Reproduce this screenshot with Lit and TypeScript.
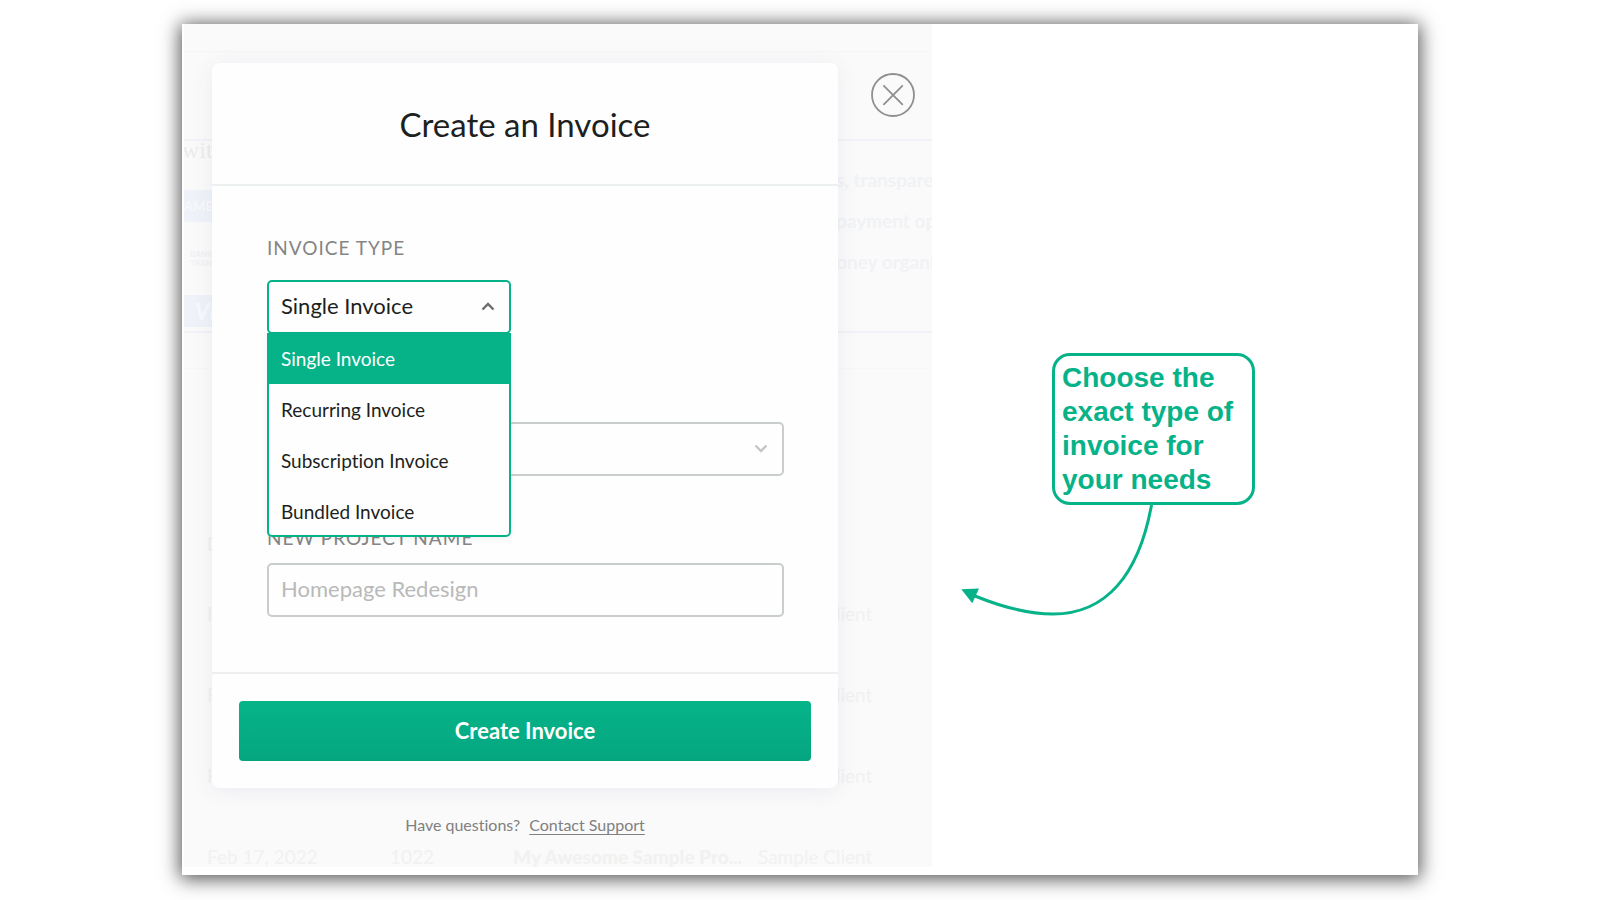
import { LitElement, html, css, svg } from "lit";
import { customElement, state } from "lit/decorators.js";

const chevron = (points: string) => html`
  <svg class="chevron" viewBox="0 0 14 9" width="14" height="9" aria-hidden="true">
    ${svg`<polyline points=${points} fill="none" stroke="currentColor" stroke-width="2.4"/>`}
  </svg>
`;

/* The dimmed invoices page that lies under the dialog. */
@customElement("invoices-backdrop")
class InvoicesBackdrop extends LitElement {
  static styles = css`
    :host {
      display: block;
      overflow: hidden;
      min-width: 0;
      background: #fafafa;
      border-left: 2px solid #fff;
      font-family: Lato, "Open Sans", sans-serif;
      font-size: 19px;
      color: #f1f1f1;
    }
    .bar {
      height: 28px;
      box-sizing: border-box;
      border-bottom: 1px solid #f6f6f6;
    }
    .tabs {
      height: 89px;
      box-sizing: border-box;
      border-bottom: 2px solid #f1f3f6;
    }
    .promo {
      display: flex;
      justify-content: space-between;
      height: 192px;
      box-sizing: border-box;
      border-bottom: 2px solid #f0f2f6;
    }
    .payments {
      display: flex;
      flex-direction: column;
    }
    .heading {
      height: 49px;
      box-sizing: border-box;
      margin-left: -2px;
      font-family: "Liberation Serif", serif;
      font-size: 24px;
      line-height: 18px;
      color: #ececec;
    }
    .brand {
      display: flex;
      align-items: center;
      height: 32px;
      width: 52px;
      background: #eff2f8;
      color: #f8f9fb;
      font-size: 13px;
      font-weight: 700;
    }
    .visa {
      padding-left: 11px;
      box-sizing: border-box;
      font-size: 22px;
      font-style: italic;
      font-weight: 900;
    }
    .bank {
      display: flex;
      flex-direction: column;
      justify-content: center;
      height: 73px;
      padding-left: 6px;
      font-size: 8px;
      line-height: 9px;
      font-weight: 900;
    }
    .benefits {
      width: 96px;
      padding-top: 18px;
      font-weight: 700;
      line-height: 41px;
      white-space: nowrap;
      color: #f1f2f5;
    }
    .strip {
      height: 36px;
      box-sizing: border-box;
      border-bottom: 1px solid #f7f7f7;
    }
    .table {
      width: 100%;
      table-layout: fixed;
      border-collapse: collapse;
      text-align: left;
      white-space: nowrap;
    }
    .table th {
      height: 204px;
      box-sizing: border-box;
      padding: 0 0 18px;
      vertical-align: bottom;
      font-weight: 400;
    }
    .table td {
      height: 81px;
      padding: 0;
    }
    .table .lead {
      width: 206px;
      padding-left: 23px;
      box-sizing: border-box;
    }
    .number {
      width: 123px;
    }
    .project {
      width: 245px;
      font-weight: 900;
    }
  `;

  render() {
    return html`
      <div class="bar"></div>
      <div class="tabs"></div>
      <div class="promo">
        <div class="payments">
          <div class="heading">with</div>
          <div class="brand">AMEX</div>
          <div class="bank"><span>BANK</span><span>TRANSFER</span></div>
          <div class="brand visa">VISA</div>
        </div>
        <div class="benefits">
          <div>s, transparent</div>
          <div>payment options</div>
          <div>oney organized</div>
        </div>
      </div>
      <div class="strip"></div>
      <table class="table">
        <thead>
          <tr><th class="lead">Date</th><th class="number"></th><th class="project"></th><th></th></tr>
        </thead>
        <tbody>
          ${[0, 1, 2].map(() => html`
            <tr><td class="lead">Feb</td><td></td><td></td><td>Sample Client</td></tr>
          `)}
          <tr>
            <td class="lead">Feb 17, 2022</td>
            <td>1022</td>
            <td class="project">My Awesome Sample Pro...</td>
            <td>Sample Client</td>
          </tr>
        </tbody>
      </table>
    `;
  }
}

@customElement("invoice-dialog")
class InvoiceDialog extends LitElement {
  @state() types = ["Single Invoice", "Recurring Invoice", "Subscription Invoice", "Bundled Invoice"];
  @state() selected = "Single Invoice";

  static styles = css`
    :host {
      display: flex;
      align-items: flex-start;
      gap: 33px;
      padding: 39px 17px 0 30px;
      font-family: Lato, "Open Sans", sans-serif;
      font-variant-ligatures: none;
      color: #1d1f21;
    }
    .main {
      flex: 1;
      min-width: 0;
    }
    .card {
      background: #fefefe;
      border-radius: 8px;
      box-shadow: 0 3px 22px rgba(60, 80, 140, 0.08);
    }
    .title {
      margin: 0;
      padding: 39px 0 38px;
      border-bottom: 2px solid #edf0f0;
      font-size: 33px;
      line-height: 44px;
      font-weight: 400;
      text-align: center;
    }
    .body {
      display: flex;
      flex-direction: column;
      padding: 50px 54px 55px 55px;
    }
    .label {
      font-size: 19px;
      line-height: 24px;
      letter-spacing: 1px;
      text-transform: uppercase;
      color: #858585;
    }
    .picker {
      position: relative;
      width: 244px;
      margin: 20px 0 88px;
    }
    .control {
      position: relative;
      display: block;
    }
    .field {
      display: block;
      width: 100%;
      height: 54px;
      box-sizing: border-box;
      margin: 0;
      padding: 0 12px 4px;
      border: 2px solid #cacdcd;
      border-radius: 5px;
      background: #fefefe;
      outline: none;
      appearance: none;
      font-family: inherit;
      font-size: 22px;
      color: inherit;
    }
    .field::placeholder {
      color: #b9b9b9;
      opacity: 1;
    }
    .open {
      border-color: #06b288;
    }
    .chevron {
      position: absolute;
      right: 16px;
      top: 22px;
      pointer-events: none;
      color: #c6c6c6;
    }
    .picker .chevron {
      color: #6c6c6c;
    }
    .options {
      position: absolute;
      z-index: 1;
      top: 53px;
      left: 0;
      right: 0;
      margin: 0;
      padding: 0;
      list-style: none;
      background: #fefefe;
      border-radius: 0 0 5px 5px;
      box-shadow: inset 0 0 0 2px #06b288, 0 2px 6px rgba(0, 0, 0, 0.06);
      font-size: 19px;
      line-height: 51px;
    }
    .option {
      padding: 0 14px;
    }
    .active {
      background: #06b288;
      color: #fff;
    }
    .project {
      margin: 50px 0 13px;
    }
    .footer {
      padding: 27px;
      border-top: 2px solid #eeefef;
    }
    .submit {
      display: block;
      width: 100%;
      height: 60px;
      padding: 0 0 2px;
      border: 0;
      border-radius: 4px;
      background: linear-gradient(#06b48a, #05a67f);
      color: #fff;
      font-family: inherit;
      font-size: 22px;
      font-weight: 700;
    }
    .help {
      display: flex;
      justify-content: center;
      gap: 9px;
      margin: 0;
      padding-top: 25px;
      font-size: 16px;
      line-height: 24px;
      color: #808080;
    }
    .link {
      color: inherit;
      text-underline-offset: 3px;
    }
    .close {
      width: 44px;
      height: 44px;
      margin-top: 10px;
      padding: 0;
      border: 0;
      background: none;
      color: #8f8f8f;
    }
    .cross {
      display: block;
    }
  `;

  render() {
    return html`
      <div class="main">
        <form class="card" @submit=${(e: Event) => e.preventDefault()}>
          <h1 class="title">Create an Invoice</h1>
          <div class="body">
            <label class="label" for="type">Invoice type</label>
            <div class="picker">
              <select class="field open" id="type">
                <option selected>${this.selected}</option>
              </select>
              ${chevron("1.5,7.5 7,2 12.5,7.5")}
              <ul class="options" role="listbox" aria-label="Invoice type">
                ${this.types.map((type) => html`
                  <li
                    class="option ${type === this.selected ? "active" : ""}"
                    role="option"
                    aria-selected=${type === this.selected}
                    @click=${() => (this.selected = type)}
                  >${type}</li>
                `)}
              </ul>
            </div>
            <div class="control">
              <select class="field" aria-label="Client"></select>
              ${chevron("1.5,1.5 7,7 12.5,1.5")}
            </div>
            <label class="label project" for="project">New project name</label>
            <input class="field" id="project" type="text" placeholder="Homepage Redesign" />
          </div>
          <div class="footer">
            <button class="submit" type="submit">Create Invoice</button>
          </div>
        </form>
        <p class="help"><span>Have questions?</span><a class="link" href="#support">Contact Support</a></p>
      </div>
      <button class="close" type="button" aria-label="Close">
        <svg class="cross" viewBox="0 0 44 44" width="44" height="44" fill="none" stroke="currentColor" stroke-width="1.8">
          <circle cx="22" cy="22" r="21" />
          <path d="M12.4 12.4 31.8 31.8M31.8 12.4 12.4 31.8" />
        </svg>
      </button>
    `;
  }
}

@customElement("callout-note")
class CalloutNote extends LitElement {
  static styles = css`
    :host {
      display: flex;
      flex-direction: column;
      align-items: flex-start;
      width: 294px;
      color: #06b288;
    }
    .note {
      align-self: flex-end;
      width: 203px;
      box-sizing: border-box;
      margin: 0;
      padding: 5px 7px;
      border: 3px solid currentColor;
      border-radius: 18px;
      background: #fff;
      font: 700 28px/34px "Liberation Sans", Arial, sans-serif;
    }
    .arrow {
      display: block;
      overflow: visible;
    }
  `;

  render() {
    return html`
      <p class="note">Choose the exact type of invoice for your needs</p>
      <svg class="arrow" viewBox="0 0 194 112" width="194" height="112" aria-hidden="true">
        <path
          d="M190.7 -1C178 70 145 109 92 109C66 109 41 102 14 91"
          fill="none" stroke="currentColor" stroke-width="3"
        />
        <path d="M0.3 84.2 18 83.6 11.3 98.3Z" fill="currentColor" />
      </svg>
    `;
  }
}

@customElement("app-root")
class AppRoot extends LitElement {
  static styles = css`
    :host {
      display: block;
      box-sizing: border-box;
      min-height: 100vh;
      padding: 24px 182px 25px;
      background: #fff;
    }
    .frame {
      display: grid;
      grid-template-columns: minmax(0, 750fr) minmax(0, 486fr);
      min-height: calc(100vh - 49px);
      background: #fff;
      box-shadow: 0 2px 18px 2px rgba(0, 0, 0, 0.68);
    }
    .screen {
      display: grid;
      margin-bottom: 8px;
      grid-template: minmax(0, 1fr) / minmax(0, 1fr);
    }
    .backdrop,
    .dialog {
      grid-area: 1 / 1;
    }
    .backdrop {
      height: 0;
      min-height: 100%;
    }
    .aside {
      padding: 329px 0 0 29px;
    }
  `;

  render() {
    return html`
      <main class="frame">
        <section class="screen">
          <invoices-backdrop class="backdrop"></invoices-backdrop>
          <invoice-dialog class="dialog"></invoice-dialog>
        </section>
        <aside class="aside"><callout-note></callout-note></aside>
      </main>
    `;
  }
}
